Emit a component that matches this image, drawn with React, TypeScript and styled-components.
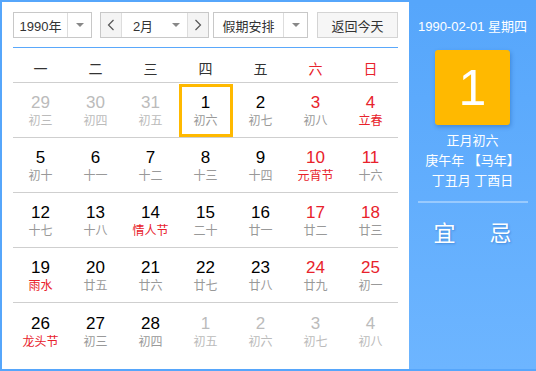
import React from "react";
import styled, { createGlobalStyle } from "styled-components";

const Global = createGlobalStyle`
  html, body { margin: 0; padding: 0; background: #fff; }
  body { font-family: "Liberation Sans", "Noto Sans CJK SC", sans-serif; }
`;

const Frame = styled.div`
  width: 536px;
  height: 371px;
  box-sizing: border-box;
  display: flex;
  border: 2px solid #56a6fb;
  border-right: none;
  background: #5aa8fb;
`;

const Main = styled.div`
  width: 407px;
  background: #fff;
  box-sizing: border-box;
  padding: 10px 11px 0 11px;
  display: flex;
  flex-direction: column;
`;

const Toolbar = styled.div`
  display: flex;
  align-items: center;
  height: 26px;
  padding-bottom: 9px;
  border-bottom: 1px solid #5aa8fb;
`;

const Select = styled.div<{ $w: number; $ml: number }>`
  width: ${(p) => p.$w}px;
  margin-left: ${(p) => p.$ml}px;
  height: 26px;
  box-sizing: border-box;
  border: 1px solid #c8c8c8;
  background: #fff;
  display: flex;
  align-items: stretch;
  font-size: 13px;
  color: #333;
`;

const SelText = styled.div`
  flex: 1;
  display: flex;
  align-items: center;
  justify-content: center;
`;

const Caret = styled.div<{ $noLine?: boolean }>`
  width: 23px;
  border-left: ${(p) => (p.$noLine ? "none" : "1px solid #ddd")};
  display: flex;
  align-items: center;
  justify-content: center;
  &::after {
    content: "";
    border-left: 4px solid transparent;
    border-right: 4px solid transparent;
    border-top: 4px solid #888;
  }
`;

const Group = styled.div`
  margin-left: 8px;
  height: 26px;
  box-sizing: border-box;
  border: 1px solid #c8c8c8;
  display: flex;
  align-items: stretch;
  font-size: 13px;
  color: #333;
`;

const Arrow = styled.div`
  width: 20px;
  background: #f4f4f4;
  display: flex;
  align-items: center;
  justify-content: center;
  color: #555;
`;

const MonthSel = styled.div`
  width: 65px;
  display: flex;
  border-left: 1px solid #ddd;
  border-right: 1px solid #ddd;
  background: #fff;
`;

const Button = styled.div`
  margin-left: 9px;
  width: 81px;
  height: 26px;
  box-sizing: border-box;
  border: 1px solid #d4d4d4;
  background: #f6f6f6;
  display: flex;
  align-items: center;
  justify-content: center;
  font-size: 13px;
  color: #333;
`;

const Grid = styled.div`
  display: grid;
  grid-template-columns: repeat(7, 55px);
  margin-top: 6px;
`;

const Week = styled.div<{ $red?: boolean }>`
  height: 28px;
  display: flex;
  align-items: center;
  justify-content: center;
  font-size: 14px;
  color: ${(p) => (p.$red ? "#e8222b" : "#333")};
  border-bottom: 1px solid #cfcfcf;
`;

const Cell = styled.div<{ $last?: boolean }>`
  height: 55px;
  box-sizing: border-box;
  display: flex;
  align-items: center;
  justify-content: center;
  border-bottom: ${(p) => (p.$last ? "none" : "1px solid #cfcfcf")};
`;

const Inner = styled.div<{ $today?: boolean }>`
  width: 54px;
  height: 53px;
  box-sizing: border-box;
  border: 3px solid ${(p) => (p.$today ? "#ffb900" : "transparent")};
  display: flex;
  flex-direction: column;
  align-items: center;
  justify-content: center;
  padding-top: 2px;
`;

const Num = styled.div<{ $c: string }>`
  font-size: 17px;
  line-height: 19px;
  color: ${(p) => p.$c};
`;

const Lunar = styled.div<{ $c: string }>`
  font-size: 12px;
  line-height: 16px;
  margin-top: 1px;
  color: ${(p) => p.$c};
`;

const Side = styled.div`
  flex: 1;
  background: linear-gradient(#56a6fb, #6db5ff);
  display: flex;
  flex-direction: column;
  align-items: center;
  color: #fff;
  padding-top: 16px;
`;

const DateLine = styled.div`
  font-size: 13px;
  height: 18px;
  line-height: 18px;
`;

const BigBox = styled.div`
  margin-top: 14px;
  width: 75px;
  height: 75px;
  border-radius: 3px;
  background: #ffb900;
  box-shadow: 1px 2px 4px rgba(0, 60, 140, 0.3);
  display: flex;
  align-items: center;
  justify-content: center;
  font-size: 50px;
  color: #fff;
`;

const InfoLine = styled.div<{ $mt: number }>`
  margin-top: ${(p) => p.$mt}px;
  font-size: 13px;
  line-height: 20px;
`;

const Divider = styled.div`
  width: 110px;
  height: 2px;
  background: rgba(255, 255, 255, 0.35);
  margin-top: 10px;
`;

const YiJi = styled.div`
  display: flex;
  gap: 34px;
  margin-top: 12px;
  font-size: 22px;
  text-shadow: 1px 1px 2px rgba(0, 60, 140, 0.3);
`;

const Chevron = ({ dir }: { dir: "l" | "r" }) => (
  <svg width="8" height="12" viewBox="0 0 8 12">
    <path
      d={dir === "l" ? "M6.5 1 L1.5 6 L6.5 11" : "M1.5 1 L6.5 6 L1.5 11"}
      fill="none"
      stroke="#555"
      strokeWidth="1.2"
    />
  </svg>
);

type D = { n: number; l: string; nc: string; lc: string; today?: boolean };

const BLACK = "#000";
const RED = "#e8222b";
const GRAY = "#999";
const FADE = "#bbb";

const mk = (n: number, l: string, nc = BLACK, lc = GRAY, today = false): D => ({ n, l, nc, lc, today });

const days: D[] = [
  mk(29, "初三", FADE, FADE), mk(30, "初四", FADE, FADE), mk(31, "初五", FADE, FADE),
  mk(1, "初六", BLACK, GRAY, true), mk(2, "初七"), mk(3, "初八", RED), mk(4, "立春", RED, RED),
  mk(5, "初十"), mk(6, "十一"), mk(7, "十二"), mk(8, "十三"), mk(9, "十四"), mk(10, "元宵节", RED, RED), mk(11, "十六", RED),
  mk(12, "十七"), mk(13, "十八"), mk(14, "情人节", BLACK, RED), mk(15, "二十"), mk(16, "廿一"), mk(17, "廿二", RED), mk(18, "廿三", RED),
  mk(19, "雨水", BLACK, RED), mk(20, "廿五"), mk(21, "廿六"), mk(22, "廿七"), mk(23, "廿八"), mk(24, "廿九", RED), mk(25, "初一", RED),
  mk(26, "龙头节", BLACK, RED), mk(27, "初三"), mk(28, "初四"), mk(1, "初五", FADE, FADE), mk(2, "初六", FADE, FADE), mk(3, "初七", FADE, FADE), mk(4, "初八", FADE, FADE),
];

const weeks = ["一", "二", "三", "四", "五", "六", "日"];

export default function App() {
  return (
    <>
      <Global />
      <Frame>
        <Main>
          <Toolbar>
            <Select $w={79} $ml={0}>
              <SelText>1990年</SelText>
              <Caret />
            </Select>
            <Group>
              <Arrow><Chevron dir="l" /></Arrow>
              <MonthSel>
                <SelText>2月</SelText>
                <Caret $noLine />
              </MonthSel>
              <Arrow><Chevron dir="r" /></Arrow>
            </Group>
            <Select $w={95} $ml={4}>
              <SelText>假期安排</SelText>
              <Caret />
            </Select>
            <Button>返回今天</Button>
          </Toolbar>
          <Grid>
            {weeks.map((w, i) => (
              <Week key={w} $red={i >= 5}>{w}</Week>
            ))}
            {days.map((d, i) => (
              <Cell key={i} $last={i >= 28}>
                <Inner $today={d.today}>
                  <Num $c={d.nc}>{d.n}</Num>
                  <Lunar $c={d.lc}>{d.l}</Lunar>
                </Inner>
              </Cell>
            ))}
          </Grid>
        </Main>
        <Side>
          <DateLine>1990-02-01 星期四</DateLine>
          <BigBox>1</BigBox>
          <InfoLine $mt={6}>正月初六</InfoLine>
          <InfoLine $mt={0}>庚午年 【马年】</InfoLine>
          <InfoLine $mt={0}>丁丑月 丁酉日</InfoLine>
          <Divider />
          <YiJi>
            <span>宜</span>
            <span>忌</span>
          </YiJi>
        </Side>
      </Frame>
    </>
  );
}
